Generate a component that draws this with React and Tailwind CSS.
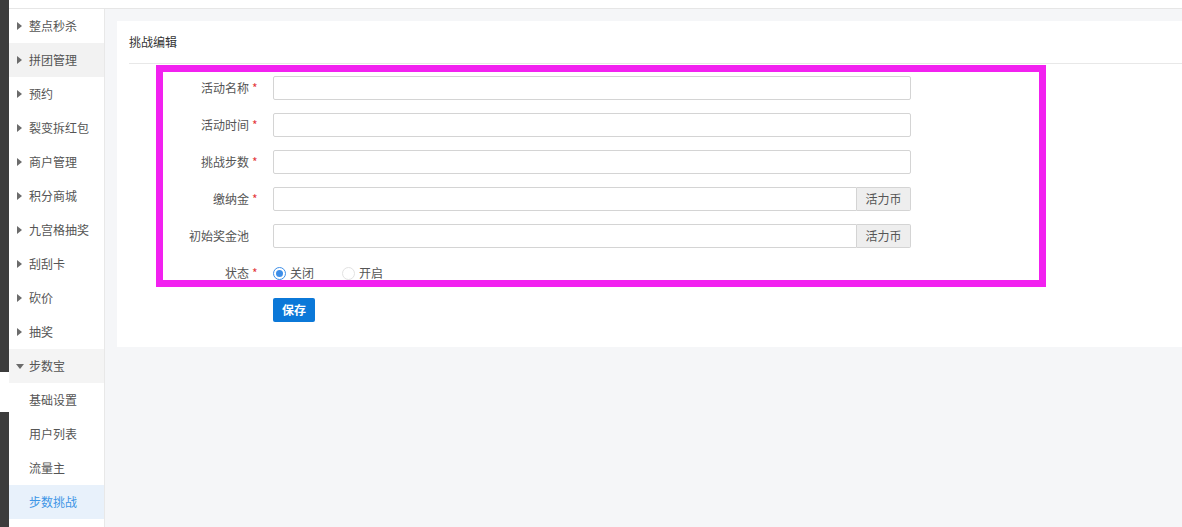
import React from 'react';

const menu = [
  { name: '整点秒杀' },
  { name: '拼团管理', hover: true },
  { name: '预约' },
  { name: '裂变拆红包' },
  { name: '商户管理' },
  { name: '积分商城' },
  { name: '九宫格抽奖' },
  { name: '刮刮卡' },
  { name: '砍价' },
  { name: '抽奖' },
];

const subMenu = ['基础设置', '用户列表', '流量主', '步数挑战'];

const fields = [
  { label: '活动名称', required: true },
  { label: '活动时间', required: true },
  { label: '挑战步数', required: true },
  { label: '缴纳金', required: true, addon: '活力币' },
  { label: '初始奖金池', required: false, addon: '活力币' },
];

function Label({ text, required }) {
  return (
    <div className="flex items-center">
      <span className="w-[132px] text-right text-[12px] text-[#555]">{text}</span>
      <span className="w-[24px] pl-[3px] text-[12px] text-[#e4393c]">{required ? '*' : ''}</span>
    </div>
  );
}

export default function App() {
  return (
    <div
      className="relative flex w-[1182px] h-[527px] overflow-hidden bg-white"
      style={{ fontFamily: '"Noto Sans CJK SC", "Noto Sans", sans-serif' }}
    >
      {/* left dark strip */}
      <div className="flex flex-col w-[9px] shrink-0">
        <div className="h-[372px] bg-[#3c3c3c]" />
        <div className="h-[40px] bg-white" />
        <div className="flex-1 bg-[#3c3c3c]" />
      </div>

      <div className="flex flex-col flex-1 min-w-0">
        {/* top bar */}
        <div className="h-[9px] shrink-0 bg-white border-b border-[#e6e6e6]" />

        <div className="flex flex-1 min-h-0">
          {/* sidebar */}
          <div className="w-[96px] shrink-0 bg-white border-r border-[#e8e8e8]">
            {menu.map((m) => (
              <div
                key={m.name}
                className={`h-[34px] flex items-center pl-[8px] ${m.hover ? 'bg-[#f2f2f2]' : ''}`}
              >
                <span className="w-0 h-0 border-y-[4px] border-y-transparent border-l-[5px] border-l-[#6b6b6b]" />
                <span className="ml-[7px] text-[12px] text-[#555]">{m.name}</span>
              </div>
            ))}
            <div className="h-[34px] flex items-center pl-[7px] bg-[#f4f4f4]">
              <span className="w-0 h-0 border-x-[4px] border-x-transparent border-t-[5px] border-t-[#6b6b6b]" />
              <span className="ml-[5px] text-[12px] text-[#555]">步数宝</span>
            </div>
            {subMenu.map((s, i) => (
              <div
                key={s}
                className={`h-[34px] flex items-center pl-[20px] text-[12px] ${
                  i === 3 ? 'bg-[#e8f1fb] text-[#3d95e6]' : 'text-[#555]'
                }`}
              >
                {s}
              </div>
            ))}
          </div>

          {/* main */}
          <div className="flex-1 min-w-0 overflow-hidden bg-[#f5f6f8] pt-[12px] pl-[12px]">
            <div className="w-[1100px] bg-white pl-[12px] pb-[25px]">
              <div className="h-[43px] flex items-center text-[12px] text-[#333] border-b border-[#e8e8e8]">
                挑战编辑
              </div>

              <div className="-ml-[12px] pt-[12px] flex flex-col gap-[13px]">
                {fields.map((f) => (
                  <div key={f.label} className="flex items-center h-[24px]">
                    <Label text={f.label} required={f.required} />
                    <div className="flex w-[638px] h-[24px]">
                      <div
                        className={`flex-1 border border-[#d4d4d4] bg-white ${
                          f.addon ? 'rounded-l-[2px]' : 'rounded-[2px]'
                        }`}
                      />
                      {f.addon && (
                        <div className="w-[54px] flex items-center justify-center border border-l-0 border-[#d4d4d4] bg-[#eeeeee] rounded-r-[2px] text-[12px] text-[#555]">
                          {f.addon}
                        </div>
                      )}
                    </div>
                  </div>
                ))}

                <div className="flex items-center h-[24px]">
                  <Label text="状态" required />
                  <div className="flex items-center text-[12px] text-[#555]">
                    <span className="w-[13px] h-[13px] rounded-full border border-[#3d8ee8] flex items-center justify-center">
                      <span className="w-[7px] h-[7px] rounded-full bg-[#3d8ee8]" />
                    </span>
                    <span className="ml-[4px]">关闭</span>
                    <span className="ml-[28px] w-[13px] h-[13px] rounded-full border border-[#e2e2e2]" />
                    <span className="ml-[4px]">开启</span>
                  </div>
                </div>

                <div className="flex items-center">
                  <div className="w-[156px]" />
                  <button className="w-[42px] h-[24px] bg-[#0b78d8] text-white text-[12px] font-bold rounded-[2px]">
                    保存
                  </button>
                </div>
              </div>
            </div>
          </div>
        </div>
      </div>

      {/* annotation box */}
      <div className="absolute left-[156px] top-[65px] w-[890px] h-[222px] border-[7px] border-[#f221f0]" />
    </div>
  );
}
